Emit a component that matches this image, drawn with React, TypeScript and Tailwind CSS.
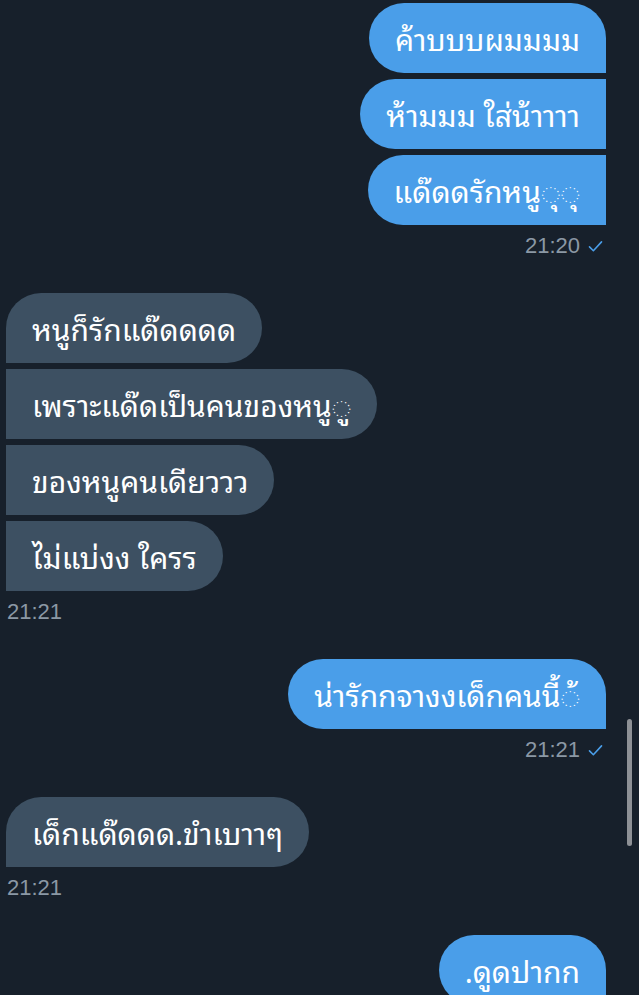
import React from 'react';

type Msg = { text: string };

const FONT = "font-['Noto_Sans_Thai_Looped','Loma','Garuda','Noto_Sans_Thai','Noto_Sans',sans-serif]";

function Check() {
  return (
    <svg width="17" height="17" viewBox="0 0 24 24" className="ml-[7px] text-[#4a9ee9]">
      <path d="M3.5 12.5l5.5 5.5L20.5 5.5" fill="none" stroke="currentColor" strokeWidth="2.2" strokeLinecap="round" strokeLinejoin="round" />
    </svg>
  );
}

function SentGroup({ msgs, time }: { msgs: Msg[]; time?: string }) {
  return (
    <div className="flex flex-col items-end pr-[33px]">
      <div className="flex flex-col items-end gap-[6px]">
        {msgs.map((m, i) => (
          <div
            key={i}
            className={`bg-[#4a9ee9] text-white text-[30px] leading-[36px] py-[17px] px-[26px] whitespace-nowrap ${
              i === 0 ? 'rounded-[35px] rounded-br-none' : 'rounded-l-[35px]'
            }`}
          >
            {m.text}
          </div>
        ))}
      </div>
      {time && (
        <div className="mt-[10px] flex items-center text-[22px] leading-[22px] text-[#8b98a5] pr-[2px] font-['Liberation_Sans',sans-serif]">
          {time}
          <Check />
        </div>
      )}
    </div>
  );
}

function RecvGroup({ msgs, time }: { msgs: Msg[]; time: string }) {
  return (
    <div className="flex flex-col items-start pl-[6px]">
      <div className="flex flex-col items-start gap-[6px]">
        {msgs.map((m, i) => (
          <div
            key={i}
            className={`bg-[#3d5062] text-white text-[30px] leading-[36px] py-[17px] px-[26px] whitespace-nowrap ${
              i === 0 ? 'rounded-[35px] rounded-bl-none' : 'rounded-r-[35px]'
            }`}
          >
            {m.text}
          </div>
        ))}
      </div>
      <div className="mt-[10px] pl-[1px] text-[22px] leading-[22px] text-[#8b98a5] font-['Liberation_Sans',sans-serif]">
        {time}
      </div>
    </div>
  );
}

export default function App() {
  return (
    <div className={`relative w-[639px] h-[995px] overflow-hidden bg-[#17202b] ${FONT}`}>
      <div className="flex flex-col gap-[36px] pt-[3px]">
        <SentGroup
          msgs={[{ text: 'ค้าบบบผมมมม' }, { text: 'ห้ามมม ใส่น้าาาา' }, { text: 'แด๊ดดรักหนู◌ุ◌ุ' }]}
          time="21:20"
        />
        <RecvGroup
          msgs={[
            { text: 'หนูก็รักแด๊ดดดด' },
            { text: 'เพราะแด๊ดเป็นคนของหนู◌ู' },
            { text: 'ของหนูคนเดียววว' },
            { text: 'ไม่แบ่งง ใครร' },
          ]}
          time="21:21"
        />
        <SentGroup msgs={[{ text: 'น่ารักกจางงเด็กคนนี้◌้' }]} time="21:21" />
        <RecvGroup msgs={[{ text: 'เด็กแด๊ดดด.ขำเบาาๆ' }]} time="21:21" />
        <SentGroup msgs={[{ text: '.ดูดปากก' }]} />
      </div>
      {/* scrollbar */}
      <div className="absolute left-[627px] top-[719px] w-[5px] h-[127px] rounded-full bg-[#8e9196]" />
    </div>
  );
}
